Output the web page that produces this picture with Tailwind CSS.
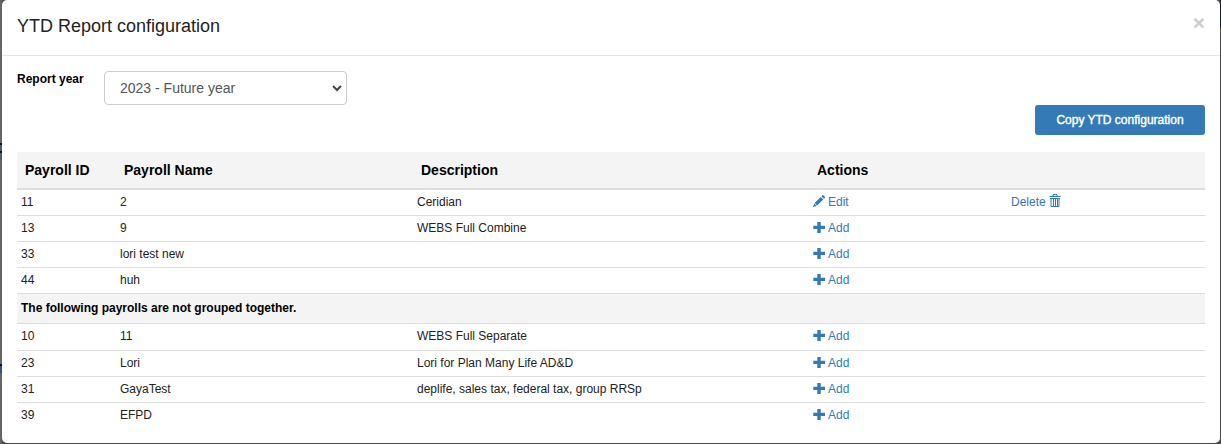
<!DOCTYPE html>
<html lang="en">
<head>
<meta charset="utf-8">
<title>YTD Report configuration</title>
<script src="https://cdn.jsdelivr.net/npm/@tailwindcss/browser@4"></script>
</head>
<body class="h-[444px] overflow-hidden bg-[#4a4a4a] pl-[2px] pr-px pb-px font-['Liberation_Sans',Arial,sans-serif] text-xs text-[#222]">
<svg class="hidden">
  <symbol id="plus" viewBox="0 0 12 12"><path fill="currentColor" d="M4.300 1h3.400v3.800H12v3.200H7.700V12H4.300V8H0.300V4.800h4z"/></symbol>
  <symbol id="pencil" viewBox="0 0 12 12"><path fill="currentColor" d="M9.300.4q.6-.6 1.200 0l1.300 1.300q.6.600 0 1.200l-.9.900L8.400 1.300zM7.800 1.900l2.500 2.500-6.200 6.200-2.500-2.500zM1.200 8.500l2.400 2.400L0 12z"/></symbol>
  <symbol id="trash" viewBox="0 0 12 13"><path fill="none" stroke="currentColor" d="M.5 2.500h11M4 2.500v-2h4v2M1 4.500h10M2 4.500v8h8v-8M4.500 5v7M6.500 5v7M8.500 5v7"/></symbol>
</svg>
<svg class="absolute left-0 top-0" width="2" height="444"><path fill="#666" d="M0 0h2v444H0z"/><path fill="#111" d="M0 143h2v2H0zM0 151h2v2H0zM0 364h2v2H0z"/><path fill="#47606f" d="M0 145h2v6H0zM0 153h2v7H0z"/><path fill="#2d5780" d="M0 366h2v7H0z"/></svg>
<div class="absolute right-0 top-0 h-7 w-px bg-[#0c2340]"></div>
<main class="h-[443px] rounded-[5px] bg-white">
  <header class="flex h-14 items-start justify-between border-b border-[#e5e5e5] pl-[15px] pr-[15px]">
    <h1 class="pt-[14px] text-[18px] leading-6">YTD Report configuration</h1>
    <button class="pt-[12px] text-[21px] font-bold leading-[21px] text-[#ccc]">×</button>
  </header>
  <section class="px-[15px]">
    <div class="flex h-[49px] pt-[15px]">
      <label class="w-[87px] pt-px font-bold leading-[14px] text-black">Report year</label>
      <div class="flex h-[34px] w-[243px] items-center justify-between rounded-[4px] border border-[#ccc] pl-[15px] pr-[4px] text-sm text-[#555]">
        <span>2023 - Future year</span>
        <svg width="10" height="8" viewBox="0 0 10 8"><path d="M1 2l4 4 4-4" fill="none" stroke="#444" stroke-width="2"/></svg>
      </div>
    </div>
    <div class="flex justify-end"><button class="h-[30px] w-[170px] rounded-[3px] bg-[#337ab7] text-white [-webkit-text-stroke:0.4px_white]">Copy YTD configuration</button></div>
    <div class="mt-[17px]">
      <div class="grid h-[38px] grid-cols-[99px_297px_396px_198px_198px] items-center border-b-2 border-[#ddd] bg-[#f4f4f4] text-sm font-bold text-black [&>span]:pl-2"><span>Payroll ID</span><span>Payroll Name</span><span>Description</span><span>Actions</span></div>
      <div id="rows"></div>
    </div>
  </section>
</main>
<script>
const rows = [
  ['11','2','Ceridian'],['13','9','WEBS Full Combine'],['33','lori test new',''],['44','huh',''],
  null,
  ['10','11','WEBS Full Separate'],['23','Lori','Lori for Plan Many Life AD&amp;D'],['31','GayaTest','deplife, sales tax, federal tax, group RRSp'],['39','EFPD','']
];
const icon = (name, cls) => `<svg class="${cls}"><use href="#${name}"/></svg>`;
document.getElementById('rows').innerHTML = rows.map((r, i) => {
  if (!r) return '<div class="h-[30px] border-t border-[#ddd] bg-[#f4f4f4] pl-1 pt-[7px] font-bold leading-[14px] text-black">The following payrolls are not grouped together.</div>';
  const h = i === 0 ? 'h-[25px] pt-[5px]' : i === 5 ? 'h-[27px] pt-[5px] border-t' : 'h-[26px] pt-[5px] border-t';
  const action = i === 0 ? icon('pencil', 'size-3') + 'Edit' : icon('plus', 'size-3') + 'Add';
  const del = i === 0 ? 'Delete' + icon('trash', '-mt-px w-3 h-[13px]') : '';
  return `<div class="grid grid-cols-[99px_297px_396px_198px_198px] items-start border-[#ddd] leading-[14px] [&>span]:pl-1 ${h}"><span>${r[0]}</span><span>${r[1]}</span><span>${r[2]}</span><span class="flex gap-[3px] text-[#337ab7]">${action}</span><span class="flex gap-[3px] text-[#337ab7]">${del}</span></div>`;
}).join('');
</script>
</body>
</html>
